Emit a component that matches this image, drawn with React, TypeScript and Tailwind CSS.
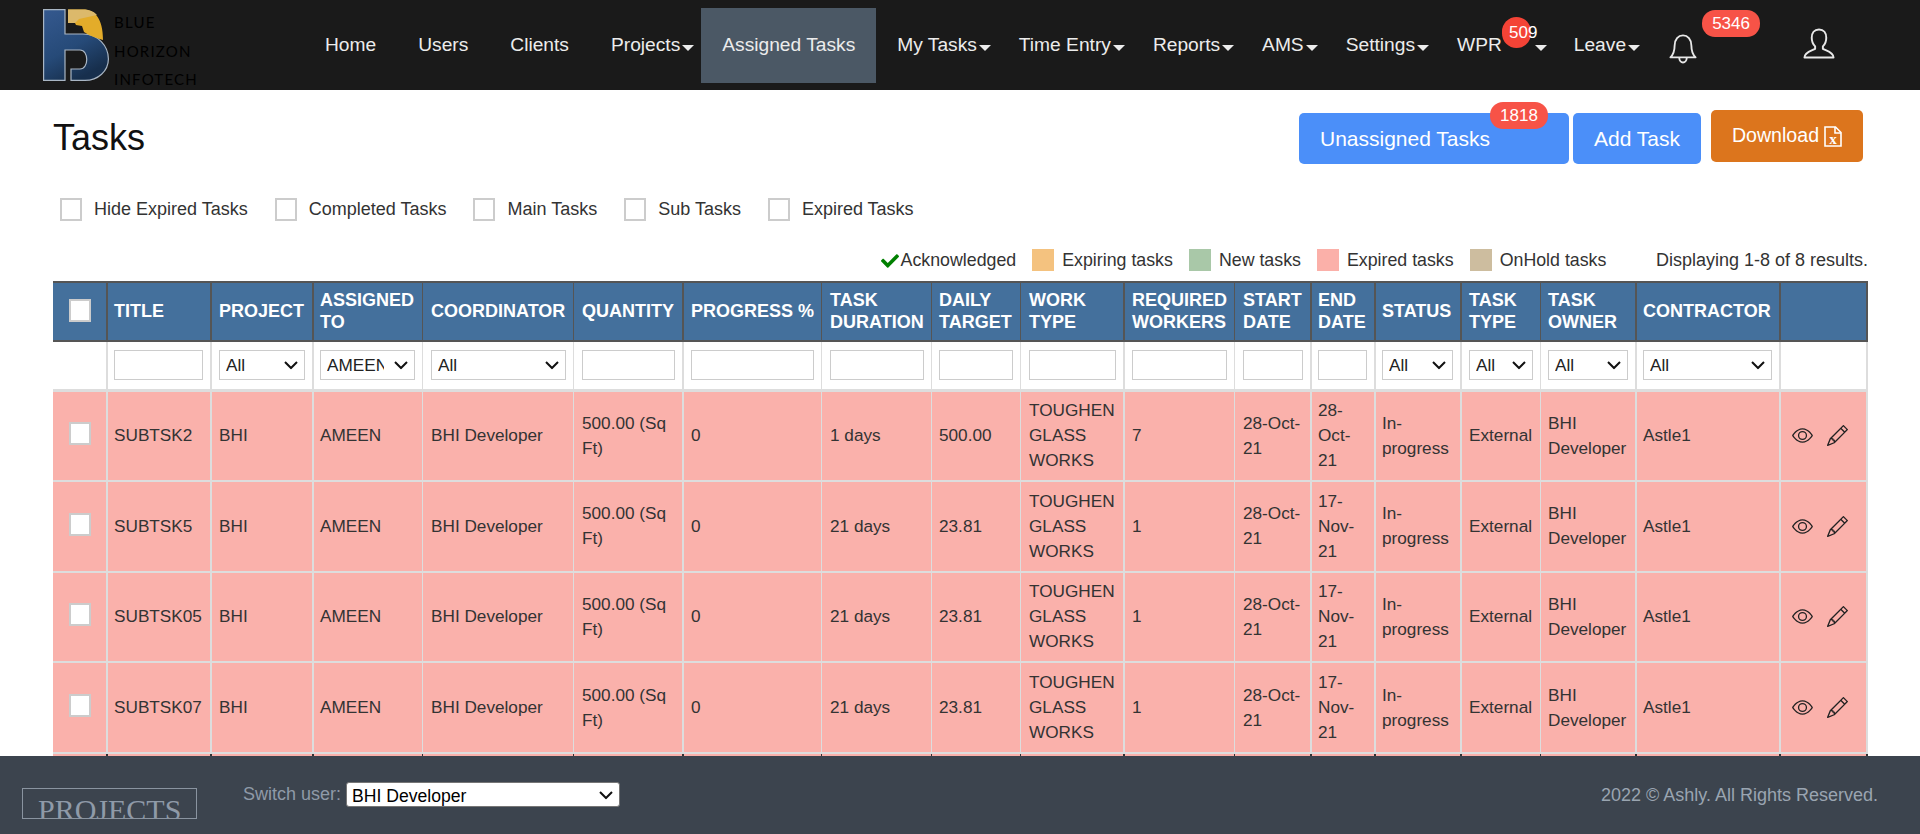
import { BsEye, BsPencil } from "react-icons/bs";
import { FaCheck } from "react-icons/fa";

const THICK = "border-l-2 pl-[6px]";
const THIN = "border-l pl-[8px]";

const columns = [
  { width: "w-[53px]", border: "pl-[7px]" },
  { width: "w-[104px]", border: THICK },
  { width: "w-[102px]", border: "border-l-2 pl-[7px]" },
  { width: "w-[110px]", border: THICK },
  { width: "w-[151px]", border: THIN },
  { width: "w-[109px]", border: THIN },
  { width: "w-[139px]", border: "border-l-2 pl-[7px]" },
  { width: "w-[110px]", border: THIN },
  { width: "w-[89px]", border: "border-l pl-[7px]" },
  { width: "w-[103px]", border: THIN },
  { width: "w-[111px]", border: "border-l-2 pl-[7px]" },
  { width: "w-[76px]", border: THIN },
  { width: "w-[64px]", border: THICK },
  { width: "w-[86px]", border: THICK },
  { width: "w-[80px]", border: "border-l-2 pl-[7px]" },
  { width: "w-[95px]", border: "border-l pl-[7px]" },
  { width: "w-[144px]", border: THICK },
  { width: "w-[89px]", border: "border-l-2 border-r-2 pl-[7px]" },
];

const headers = [
  "",
  "Title",
  "Project",
  "Assigned To",
  "Coordinator",
  "Quantity",
  "Progress %",
  "Task Duration",
  "Daily Target",
  "Work Type",
  "Required Workers",
  "Start Date",
  "End Date",
  "Status",
  "Task Type",
  "Task Owner",
  "Contractor",
  "",
];

// null = no control, "" = text input, otherwise select value
const filters: (string | null)[] = [
  null, "", "All", "AMEEN", "All", "", "", "", "", "", "", "", "", "All", "All", "All", "All", null,
];

const rows = [
  { title: "SUBTSK2", duration: "1 days", target: "500.00", workers: "7", end: "28-Oct-21" },
  { title: "SUBTSK5", duration: "21 days", target: "23.81", workers: "1", end: "17-Nov-21" },
  { title: "SUBTSK05", duration: "21 days", target: "23.81", workers: "1", end: "17-Nov-21" },
  { title: "SUBTSK07", duration: "21 days", target: "23.81", workers: "1", end: "17-Nov-21" },
];

const navItems = [
  { label: "Home" },
  { label: "Users" },
  { label: "Clients" },
  { label: "Projects", caret: true },
  { label: "Assigned Tasks", active: true },
  { label: "My Tasks", caret: true },
  { label: "Time Entry", caret: true },
  { label: "Reports", caret: true },
  { label: "AMS", caret: true },
  { label: "Settings", caret: true },
];

const legend = [
  { label: "Expiring tasks", color: "bg-[#f4c27f]" },
  { label: "New tasks", color: "bg-[#a9c8a8]" },
  { label: "Expired tasks", color: "bg-[#fbb0a9]" },
  { label: "OnHold tasks", color: "bg-[#cdbd9f]" },
];

function Caret({ className = "ml-[2px]" }: { className?: string }) {
  return <span className={`inline-block mt-[5px] border-x-[6px] border-t-[6px] border-x-transparent border-t-[#ececec] ${className}`} />;
}

function Logo() {
  return (
    <svg width="66" height="72" viewBox="0 0 66 72" className="shrink-0">
      <defs>
        <linearGradient id="logoBlue" x1="0" y1="0" x2="0.5" y2="1">
          <stop offset="0" stopColor="#35598f" />
          <stop offset="0.6" stopColor="#264a78" />
          <stop offset="1" stopColor="#172f4d" />
        </linearGradient>
      </defs>
      <path
        d="M.6 .6H22V25H40C55 25 65.4 37 65.4 50C65.4 62 55 71.4 42 71.4H28V60H37C46 60 46 41 37 41H22V71.4H.6Z"
        fill="url(#logoBlue)"
        stroke="#a9b6c4"
        strokeWidth="1.2"
      />
      <path d="M25 .6H40C52 .6 60 10 60 31C53 29 47 27 41 23L39 17L33 16L32 14H25Z" fill="#e3ac2a" />
      <path d="M25 .6H40C46 .6 50 2 54 6L36 10L32 14H25Z" fill="#dcb96b" />
    </svg>
  );
}

function BellIcon() {
  return (
    <svg width="28" height="31" viewBox="0 0 30 32" fill="none" stroke="#e8e8e8" strokeWidth="2" strokeLinejoin="round" className="block">
      <path d="M1.5 25.5C5 22 6 19 6 13C6 6 10 2 15 2C20 2 24 6 24 13C24 19 25 22 28.5 25.5Z" />
      <path d="M11 26C11 29 13 31 15 31C17 31 19 29 19 26" />
    </svg>
  );
}

function UserIcon() {
  return (
    <svg width="32" height="31" viewBox="0 0 33 32" fill="none" stroke="#e8e8e8" strokeWidth="2" strokeLinejoin="round" className="block">
      <path d="M16.5 1.5C11.5 1.5 9 5.5 9 10C9 14 10.5 17 12.5 19V21.5C9 23.5 1.5 25 1.5 30.5H31.5C31.5 25 24 23.5 20.5 21.5V19C22.5 17 24 14 24 10C24 5.5 21.5 1.5 16.5 1.5Z" />
    </svg>
  );
}

function ExcelIcon() {
  return (
    <svg width="18" height="21" viewBox="0 0 18 21" fill="none" stroke="white" strokeWidth="1.6" className="shrink-0">
      <path d="M1 1H11.5L17 6.5V20H1Z" />
      <path d="M11 1V7H17" />
      <text x="9" y="17.5" textAnchor="middle" fontFamily="Liberation Serif, serif" fontWeight="bold" fontSize="15" fill="white" stroke="none">
        x
      </text>
    </svg>
  );
}

function Check({ className = "" }: { className?: string }) {
  return (
    <input
      type="checkbox"
      className={`appearance-none block w-[22px] h-[23px] shrink-0 bg-white border-2 border-[#ccc] ${className}`}
    />
  );
}

// native look of the windows chrome select: wide chevron on the right
function Select({ value, className }: { value: string; className: string }) {
  return (
    <div className="relative">
      <select className={`appearance-none block w-full bg-white ${className}`}>
        <option>{value}</option>
      </select>
      <svg
        width="14"
        height="9"
        viewBox="0 0 14 9"
        fill="none"
        stroke="#111"
        strokeWidth="2"
        className="absolute right-[7px] top-1/2 -translate-y-1/2 pointer-events-none"
      >
        <path d="M1 1.5L7 7.5L13 1.5" />
      </svg>
    </div>
  );
}

function Navbar() {
  return (
    <header className="h-[90px] shrink-0 bg-[#1a1a1a] flex items-start pl-[43px] text-[#ececec] text-[19.2px]">
      <div className="flex mt-[9px] w-[261px]">
        <Logo />
        <div className="ml-[5px] -mt-[1px] font-['Lato',sans-serif] text-[15px] leading-[28.5px] tracking-[1.2px] text-black">
          <div>BLUE</div>
          <div>HORIZON</div>
          <div>INFOTECH</div>
        </div>
      </div>
      <nav className="flex mt-2 h-[75px]">
        {navItems.map((item) => (
          <a
            key={item.label}
            className={`flex items-center pl-[21px] h-full whitespace-nowrap ${item.caret ? "pr-[7px]" : "pr-[21px]"} ${item.active ? "bg-[#4b5865]" : ""}`}
          >
            {item.label}
            {item.caret && <Caret />}
          </a>
        ))}
        <a className="relative flex items-center pl-[21px] pr-[6px] h-full">
          WPR
          <span className="absolute left-[66px] top-[9px] w-[29px] h-[31px] rounded-full bg-[#f44336] text-[17px] text-white leading-[31px] whitespace-nowrap pl-[7px]">
            509
          </span>
          <Caret className="ml-[33px]" />
        </a>
        <a className="flex items-center pl-[21px] pr-[7px] h-full">
          Leave
          <Caret />
        </a>
        <div className="relative mt-[25px] ml-[22px]">
          <BellIcon />
          <span className="absolute left-[33px] -top-[23px] w-[58px] h-[27px] rounded-[13px] bg-[#f75347] text-white text-[17px] leading-[27px] text-center">
            5346
          </span>
        </div>
        <div className="mt-5 ml-[105.5px]">
          <UserIcon />
        </div>
      </nav>
    </header>
  );
}

function TaskTable() {
  return (
    <table className="table-fixed border-separate border-spacing-0 w-[1815px] text-[17.2px] leading-[25px] text-[#333]">
      <colgroup>
        {columns.map((c, i) => (
          <col key={i} className={c.width} />
        ))}
      </colgroup>
      <thead>
        <tr className="bg-[#44709c] text-white">
          {headers.map((h, i) => (
            <th
              key={i}
              className={`h-[61px] pr-[6px] pb-[2px] border-y-2 border-[#555] text-left align-middle font-bold uppercase text-[18px] leading-[22px] ${columns[i].border}`}
            >
              {i === 0 ? <Check className="mx-auto" /> : h}
            </th>
          ))}
        </tr>
        <tr className="bg-white">
          {filters.map((f, i) => (
            <td key={i} className={`h-[49.5px] pr-[7px] border-b-[3px] border-[#ddd] ${columns[i].border}`}>
              {f === "" && <input className="block w-full h-[30px] bg-white border border-[#ccc]" />}
              {f !== "" && f !== null && (
                <Select
                  value={f}
                  className="h-[30px] border border-[#ccc] text-[17.2px] text-[#222] pl-[6px] pr-[30px]"
                />
              )}
            </td>
          ))}
        </tr>
      </thead>
      <tbody>
        {rows.map((r) => (
          <tr key={r.title} className="bg-[#fab1ab]">
            {[
              null,
              r.title,
              "BHI",
              "AMEEN",
              "BHI Developer",
              "500.00 (Sq Ft)",
              "0",
              r.duration,
              r.target,
              "TOUGHEN GLASS WORKS",
              r.workers,
              "28-Oct-21",
              r.end,
              "In-progress",
              "External",
              "BHI Developer",
              "Astle1",
            ].map((value, i) => (
              <td
                key={i}
                className={`py-[6.8px] pr-[7px] align-middle border-b-2 border-[#ddd] ${columns[i].border}`}
              >
                {i === 0 ? <Check className="mx-auto -mt-1" /> : value}
              </td>
            ))}
            <td className={`pr-[7px] align-middle border-b-2 border-[#ddd] ${columns[17].border}`}>
              <div className="flex items-center gap-[14px] pl-[4px] text-[#222]">
                <BsEye size={21} />
                <BsPencil size={21} />
              </div>
            </td>
          </tr>
        ))}
        {/* next row, only its top edge shows above the footer */}
        <tr className="bg-[#fab1ab]">
          {columns.map((c, i) => (
            <td key={i} className={`h-[90px] ${c.border}`} />
          ))}
        </tr>
      </tbody>
    </table>
  );
}

export default function App() {
  return (
    <div className="h-screen flex flex-col overflow-hidden bg-white font-['Liberation_Sans',Arial,sans-serif] text-[18px] text-[#333]">
      <Navbar />

      <main className="flex-1 min-h-0 overflow-hidden pl-[53px]">
        <div className="flex items-start justify-between pt-5 pr-[57px]">
          <h1 className="mt-[8px] text-[36px] leading-[40px] text-[#111]">Tasks</h1>
          <div className="flex items-start">
            <a className="relative mt-[3px] flex items-center w-[270px] h-[51px] pl-[21px] rounded-[5px] bg-[#4b8ff9] text-white text-[21px]">
              Unassigned Tasks
              <span className="absolute left-[191px] -top-[11px] w-[58px] h-[27px] rounded-[13px] bg-[#f75347] text-[17px] leading-[27px] text-center">
                1818
              </span>
            </a>
            <a className="ml-1 mt-[3px] flex items-center justify-center w-[128px] h-[51px] rounded-[5px] bg-[#4b8ff9] text-white text-[21px]">
              Add Task
            </a>
            <a className="ml-[10px] flex items-center justify-center gap-[5px] w-[152px] h-[52px] rounded-[5px] bg-[#dc751d] text-white text-[19.6px]">
              Download
              <ExcelIcon />
            </a>
          </div>
        </div>

        <div className="flex items-center gap-[27px] pl-[7px] mt-[32px]">
          {["Hide Expired Tasks", "Completed Tasks", "Main Tasks", "Sub Tasks", "Expired Tasks"].map((label) => (
            <label key={label} className="flex items-center gap-3">
              <Check />
              {label}
            </label>
          ))}
        </div>

        <div className="flex items-center justify-end h-[22px] mt-[26px] mb-[10px] pr-[52px] text-[17.8px]">
          <FaCheck size={18} className="text-[#008000] mt-[2px]" />
          <span className="ml-[2px] mr-4">Acknowledged</span>
          {legend.map((l) => (
            <div key={l.label} className="flex items-center gap-2 mr-4">
              <span className={`w-[22px] h-[22px] ${l.color}`} />
              {l.label}
            </div>
          ))}
          <span className="ml-[33.5px] text-[18px]">Displaying 1-8 of 8 results.</span>
        </div>

        <TaskTable />
      </main>

      <footer className="h-[78px] shrink-0 bg-[#3c444e] flex items-start text-[#8f9aa8]">
        <div className="mt-[32px] ml-[22px] w-[175px] h-[31px] overflow-hidden border border-[#8a94a0] pl-[15px] font-['Liberation_Serif',serif] text-[30px] leading-[42px] whitespace-nowrap">
          PROJECTS
        </div>
        <div className="flex items-center mt-[25px] ml-[46px]">
          <span>Switch user:</span>
          <div className="ml-[5px] w-[274px]">
            <Select value="BHI Developer" className="h-[25px] rounded-[3px] border border-[#767676] text-black text-[17.6px] pl-[5px]" />
          </div>
        </div>
        <p className="ml-auto mt-[26px] mr-[42px] text-[#9aa5b1]">2022 © Ashly. All Rights Reserved.</p>
      </footer>
    </div>
  );
}
